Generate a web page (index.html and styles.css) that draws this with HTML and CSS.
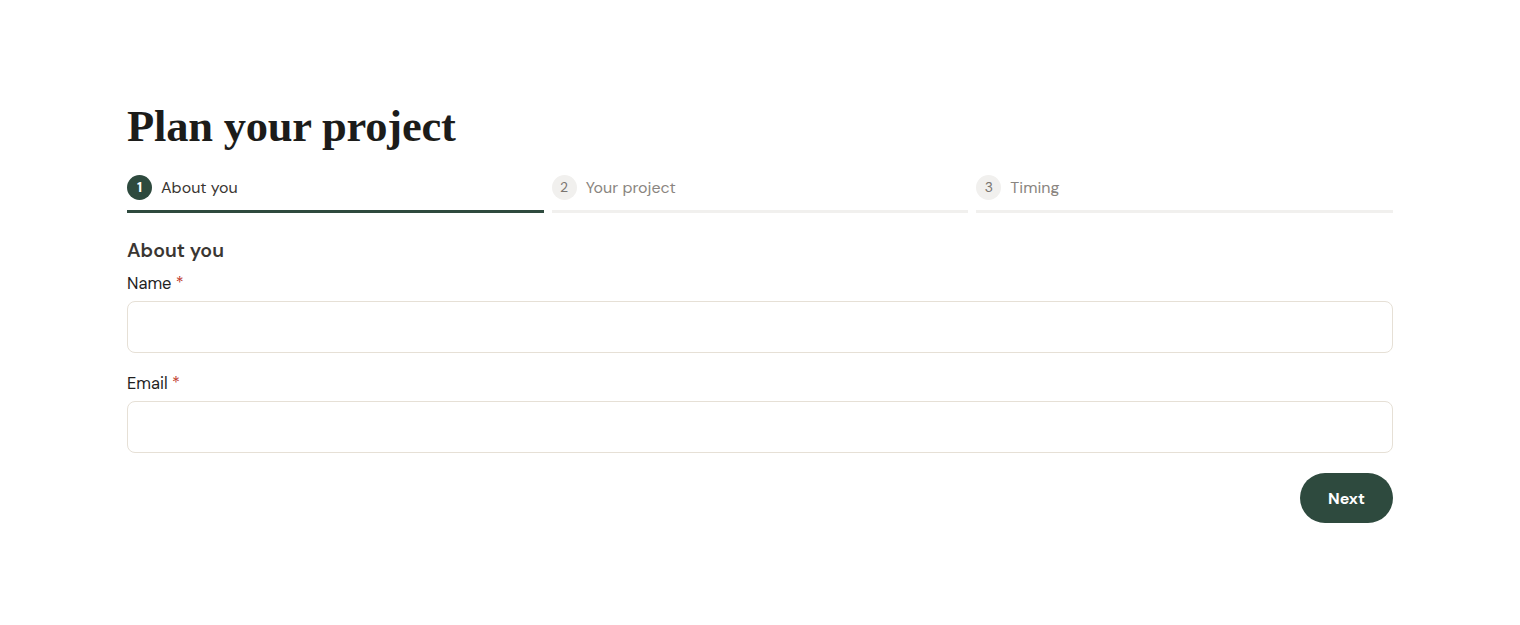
FILE: index.html
```html
<!DOCTYPE html>
<html lang="en">
<head>
<meta charset="utf-8">
<title>Plan your project</title>
<link rel="stylesheet" href="styles.css">
</head>
<body>
<main class="page">
  <h1 class="title">Plan your project</h1>
  <ol class="steps">
    <li class="step step-active"><span class="step-num">1</span><span class="step-label">About you</span></li>
    <li class="step"><span class="step-num">2</span><span class="step-label">Your project</span></li>
    <li class="step"><span class="step-num">3</span><span class="step-label">Timing</span></li>
  </ol>
  <form class="form">
    <h2 class="section-title">About you</h2>
    <div class="field">
      <label class="label" for="name">Name <span class="req">*</span></label>
      <input class="input" id="name" type="text">
    </div>
    <div class="field">
      <label class="label" for="email">Email <span class="req">*</span></label>
      <input class="input" id="email" type="email">
    </div>
    <div class="actions">
      <button class="btn" type="button">Next</button>
    </div>
  </form>
</main>
</body>
</html>
```
FILE: styles.css
```css
* { box-sizing: border-box; }
body {
  margin: 0;
  background: #fff;
  font-family: "DM Sans", "Lato", "Inter", sans-serif;
  color: #1f1f1f;
}
.page {
  max-width: 1266px;
  margin: 0 auto;
  padding-top: 96px;
}
.title {
  margin: 0;
  font-family: "Liberation Serif", "DejaVu Serif", serif;
  font-weight: 700;
  font-size: 44.5px;
  line-height: 60px;
  color: #1c1c1a;
  letter-spacing: -0.2px;
}
.steps {
  list-style: none;
  margin: 15px 0 0;
  padding: 0;
  display: grid;
  grid-template-columns: repeat(3, 1fr);
  gap: 8px;
}
.step {
  display: flex;
  align-items: center;
  gap: 9px;
  height: 42px;
  padding-bottom: 7px;
  border-bottom: 3px solid #f1f0ee;
  color: #8a8580;
  font-size: 16px;
}
.step-active {
  border-bottom-color: #2e4a3e;
  color: #3a3632;
}
.step-num {
  width: 25px;
  height: 25px;
  border-radius: 50%;
  background: #f1f0ee;
  color: #7a7570;
  font-size: 14px;
  display: flex;
  align-items: center;
  justify-content: center;
}
.step-active .step-num {
  background: #2e4a3e;
  color: #fff;
  font-weight: 700;
}
.form {
  display: flex;
  flex-direction: column;
}
.section-title {
  margin: 24px 0 0;
  font-size: 19.5px;
  font-weight: 600;
  line-height: 28px;
  color: #3a3632;
}
.field {
  display: flex;
  flex-direction: column;
}
.field + .field { margin-top: 12px; }
.label {
  margin-top: 7px;
  font-size: 16.5px;
  line-height: 24px;
  color: #1f1f1f;
  margin-bottom: 5px;
}
.req { color: #c0392b; }
.input {
  height: 52px;
  border: 1px solid #e6e0d6;
  border-radius: 8px;
  background: #fff;
  font: inherit;
  padding: 0 14px;
}
.actions {
  display: flex;
  justify-content: flex-end;
  margin-top: 20px;
}
.btn {
  width: 93px;
  height: 50px;
  border: 0;
  border-radius: 25px;
  background: #2e4a3e;
  color: #fff;
  font-family: inherit;
  font-weight: 700;
  font-size: 16px;
}
```
